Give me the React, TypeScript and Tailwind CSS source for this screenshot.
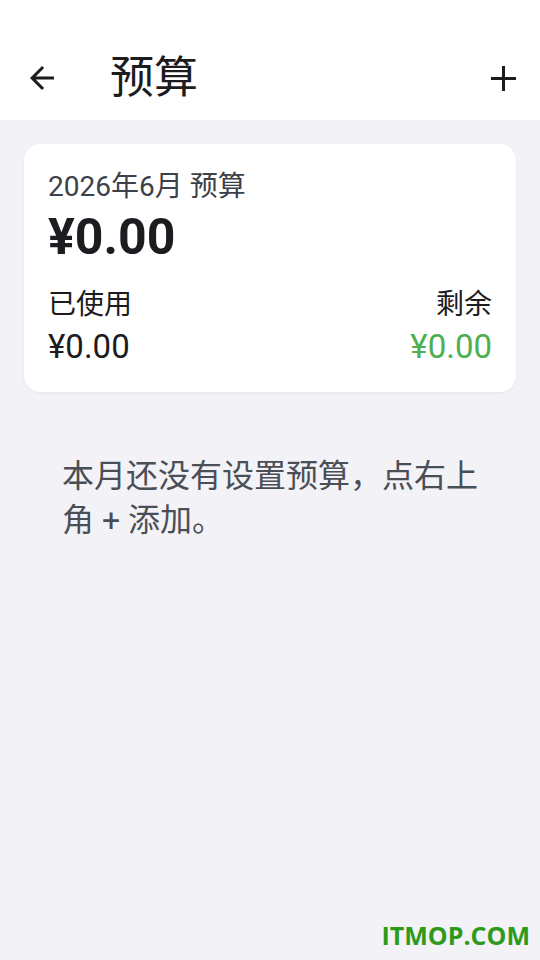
const font = { fontFamily: 'Roboto, "Noto Sans CJK SC", sans-serif' };

function BackIcon() {
  return (
    <svg viewBox="0 0 24 24" className="h-[36px] w-[36px] fill-[#1c1c1e]">
      <path d="M20 11H7.83l5.59-5.59L12 4l-8 8 8 8 1.41-1.41L7.83 13H20v-2z" />
    </svg>
  );
}

function AddIcon() {
  return (
    <svg viewBox="0 0 24 24" className="h-[43px] w-[43px] fill-[#1c1c1e]">
      <path d="M19 12.85h-6.15V19h-1.7v-6.15H5v-1.7h6.15V5h1.7v6.15H19z" />
    </svg>
  );
}

export default function App() {
  return (
    <div className="flex h-[960px] w-[540px] flex-col bg-[#f2f2f7]" style={font}>
      <header className="flex h-[120px] items-center bg-white pl-[24px] pr-[15px] pt-[36px]">
        <BackIcon />
        <h1 className="ml-[50px] text-[44px] leading-none text-[#1c1c1e]">预算</h1>
        <div className="ml-auto">
          <AddIcon />
        </div>
      </header>

      <main className="px-[24px] pt-[24px]">
        <section className="rounded-[16px] bg-white px-[24px] pb-[24px] pt-[24px] shadow-[0_1px_3px_rgba(0,0,0,0.06)]">
          <p className="text-[28px] leading-[38px] text-[#3c4048]">2026年6月 预算</p>
          <p className="mt-[2px] text-[50px] font-bold leading-[58px] text-[#1b1d21]">¥0.00</p>
          <div className="mt-[20px] flex justify-between">
            <div>
              <p className="text-[28px] leading-[38px] text-[#1c1c1e]">已使用</p>
              <p className="mt-[2px] text-[33px] leading-[42px] text-[#1c1c1e]">¥0.00</p>
            </div>
            <div className="text-right">
              <p className="text-[28px] leading-[38px] text-[#1c1c1e]">剩余</p>
              <p className="mt-[2px] text-[33px] leading-[42px] text-[#4caf50]">¥0.00</p>
            </div>
          </div>
        </section>

        <p className="mt-[62px] px-[38px] text-[32px] leading-[44px] text-[#4a4e55]">
          本月还没有设置预算，点右上角 + 添加。
        </p>
      </main>

      <div className="mt-auto flex justify-end px-[10px] pb-[6px]">
        <span className="text-[25px] font-bold text-[#2e9a1c]" style={{ fontFamily: '"Open Sans", sans-serif' }}>
          ITMOP.COM
        </span>
      </div>
    </div>
  );
}
